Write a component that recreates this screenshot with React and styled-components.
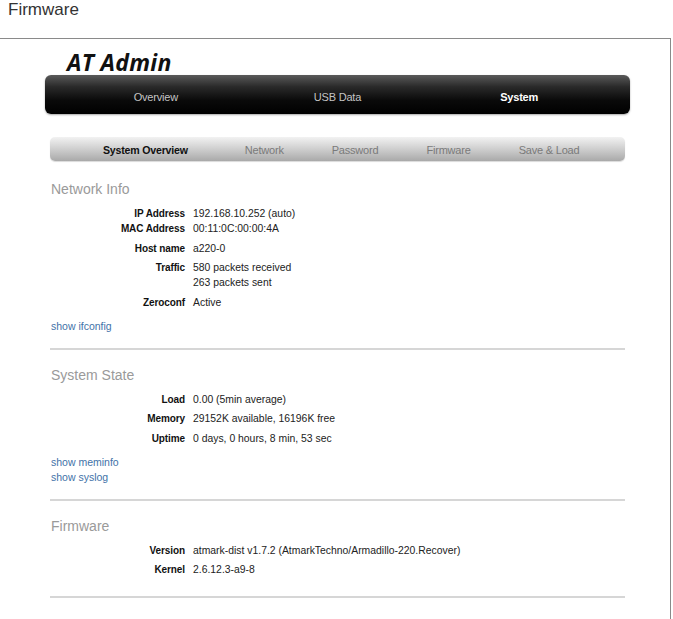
import styled, { createGlobalStyle } from "styled-components"

const GlobalStyle = createGlobalStyle`
    body {
        margin: 0;
        background: white;
        font-family: "Liberation Sans", Arial, sans-serif;
        color: #222;
    }
`

const sections = [
    {
        title: "Network Info",
        rows: [
            [["IP Address", "192.168.10.252 (auto)"], ["MAC Address", "00:11:0C:00:00:4A"]],
            [["Host name", "a220-0"]],
            [["Traffic", "580 packets received"], ["", "263 packets sent"]],
            [["Zeroconf", "Active"]],
        ],
        links: ["show ifconfig"],
    },
    {
        title: "System State",
        rows: [
            [["Load", "0.00 (5min average)"]],
            [["Memory", "29152K available, 16196K free"]],
            [["Uptime", "0 days, 0 hours, 8 min, 53 sec"]],
        ],
        links: ["show meminfo", "show syslog"],
    },
    {
        title: "Firmware",
        rows: [
            [["Version", "atmark-dist v1.7.2 (AtmarkTechno/Armadillo-220.Recover)"]],
            [["Kernel", "2.6.12.3-a9-8"]],
        ],
        links: [],
    },
]

const mainTabs = ["Overview", "USB Data", "System"]
const subTabs = ["System Overview", "Network", "Password", "Firmware", "Save & Load"]

function App() {
    return (
        <>
            <GlobalStyle />
            <Caption>Firmware</Caption>
            <Frame>
                <Page>
                    <Title>AT Admin</Title>
                    <MainNav>
                        {mainTabs.map(tab => (
                            <MainTab key={tab} active={tab === "System"}>{tab}</MainTab>
                        ))}
                    </MainNav>
                    <SubNav>
                        {subTabs.map(tab => (
                            <SubTab key={tab} active={tab === "System Overview"}>{tab}</SubTab>
                        ))}
                    </SubNav>
                    {sections.map(section => (
                        <Section key={section.title} noLinks={section.links.length === 0}>
                            <Heading>{section.title}</Heading>
                            {section.rows.map((group, i) => (
                                <Group key={i}>
                                    {group.map(([label, value], j) => (
                                        <Line key={j}>
                                            <Label>{label}</Label>
                                            <Value>{value}</Value>
                                        </Line>
                                    ))}
                                </Group>
                            ))}
                            {section.links.length > 0 &&
                                <Links>
                                    {section.links.map(link => <Link key={link}>{link}</Link>)}
                                </Links>
                            }
                        </Section>
                    ))}
                </Page>
            </Frame>
        </>
    )
}

export default App


const Caption = styled.div`
    font-size: 17px;
    line-height: 20px;
    color: #333;
    padding: 0 0 0 8px;
    height: 38px;
    box-sizing: border-box;
`

const Frame = styled.div`
    width: 671px;
    min-height: 590px;
    box-sizing: border-box;
    border-top: 1px solid #8a8a8a;
    border-right: 1px solid #8a8a8a;
`

const Page = styled.div`
    width: 585px;
    margin-left: 45px;
    padding-top: 10px;
`

const Title = styled.div`
    font-family: "Open Sans", "Liberation Sans", sans-serif;
    font-weight: 700;
    font-style: italic;
    font-size: 23px;
    line-height: 26px;
    color: #111;
    margin-left: 22px;
    letter-spacing: 0.3px;
`

const MainNav = styled.div`
    display: grid;
    grid-template-columns: repeat(3, 1fr);
    align-items: center;
    height: 39px;
    padding: 0 20px;
    border-radius: 6px;
    background: linear-gradient(to bottom, #5a5a5a 0%, #2a2a2a 30%, #0a0a0a 65%, #000 100%);
    box-shadow: 0 1px 2px rgba(0, 0, 0, 0.35);
`

const MainTab = styled.div`
    text-align: center;
    font-size: 11px;
    padding-top: 5px;
    letter-spacing: -0.2px;
    font-weight: ${props => props.active ? 700 : 400};
    color: ${props => props.active ? '#fff' : '#c4c4c4'};
`

const SubNav = styled.div`
    display: flex;
    align-items: center;
    gap: 48px;
    height: 24px;
    margin: 23px 5px 3px;
    padding-left: 53px;
    border-radius: 5px;
    background: linear-gradient(to bottom, #f2f2f2 0%, #d2d2d2 45%, #a9a9a9 100%);
    box-shadow: 0 1px 1px rgba(0, 0, 0, 0.15);
`

const SubTab = styled.div`
    padding-top: 1px;
    letter-spacing: -0.2px;
    font-size: ${props => props.active ? '10.6px' : '11px'};
    padding-right: ${props => props.active ? '9px' : '0'};
    font-weight: ${props => props.active ? 700 : 400};
    color: ${props => props.active ? '#111' : '#7a7a7a'};
`

const Section = styled.div`
    margin: 0 5px;
    padding: 17px 0 ${props => props.noLinks ? '19px' : '14px'} 1px;
    border-bottom: 2px solid #d6d6d6;
`

const Heading = styled.div`
    font-size: 14px;
    line-height: 16px;
    color: #9a9a9a;
    margin-bottom: 9px;
`

const Group = styled.div`
    & + & {
        margin-top: 4.5px;
    }
`

const Line = styled.div`
    display: grid;
    grid-template-columns: 134px 1fr;
    column-gap: 8px;
    font-size: 10.4px;
    line-height: 15px;
`

const Label = styled.div`
    text-align: right;
    font-size: 10px;
    font-weight: 700;
    color: #111;
    letter-spacing: -0.1px;
`

const Value = styled.div`
    color: #222;
`

const Links = styled.div`
    margin-top: 9px;
`

const Link = styled.a`
    display: block;
    font-size: 10.5px;
    line-height: 15px;
    color: #4272a8;
    cursor: pointer;
`
